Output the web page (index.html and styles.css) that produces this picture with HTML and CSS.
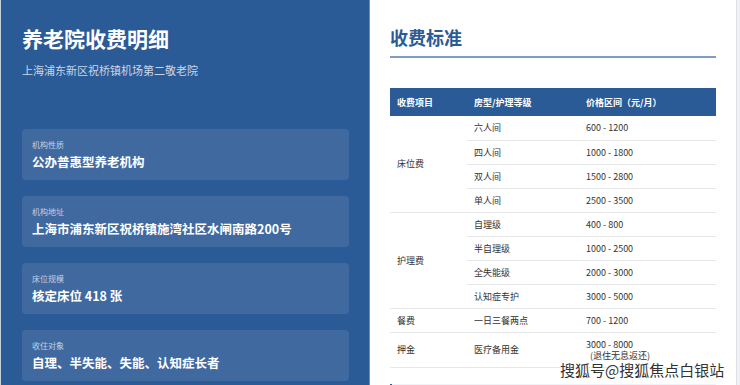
FILE: index.html
```html
<html>
<head>
    <meta charset="UTF-8">
    <meta name="viewport" content="width=device-width, initial-scale=1.0">
    <title>养老院收费明细</title>
    <link rel="stylesheet" href="styles.css">
</head>
<body>
<div class="page">
    <aside class="sidebar">
        <h1 class="title">养老院收费明细</h1>
        <p class="subtitle">上海浦东新区祝桥镇机场第二敬老院</p>

        <div class="info-list">
            <div class="info-card">
                <div class="info-label">机构性质</div>
                <div class="info-value">公办普惠型养老机构</div>
            </div>
            <div class="info-card">
                <div class="info-label">机构地址</div>
                <div class="info-value">上海市浦东新区祝桥镇施湾社区水闸南路200号</div>
            </div>
            <div class="info-card">
                <div class="info-label">床位规模</div>
                <div class="info-value">核定床位 418 张</div>
            </div>
            <div class="info-card">
                <div class="info-label">收住对象</div>
                <div class="info-value">自理、半失能、失能、认知症长者</div>
            </div>
        </div>
    </aside>

    <main class="content">
        <h2 class="section-title">收费标准</h2>

        <table class="fee-table">
            <thead>
                <tr>
                    <th class="col-item">收费项目</th>
                    <th class="col-type">房型/护理等级</th>
                    <th>价格区间（元/月）</th>
                </tr>
            </thead>
            <tbody>
                <tr>
                    <td rowspan="4">床位费</td>
                    <td>六人间</td>
                    <td>600 - 1200</td>
                </tr>
                <tr>
                    <td>四人间</td>
                    <td>1000 - 1800</td>
                </tr>
                <tr>
                    <td>双人间</td>
                    <td>1500 - 2800</td>
                </tr>
                <tr>
                    <td>单人间</td>
                    <td>2500 - 3500</td>
                </tr>
                <tr>
                    <td rowspan="4">护理费</td>
                    <td>自理级</td>
                    <td>400 - 800</td>
                </tr>
                <tr>
                    <td>半自理级</td>
                    <td>1000 - 2500</td>
                </tr>
                <tr>
                    <td>全失能级</td>
                    <td>2000 - 3000</td>
                </tr>
                <tr>
                    <td>认知症专护</td>
                    <td>3000 - 5000</td>
                </tr>
                <tr>
                    <td>餐费</td>
                    <td>一日三餐两点</td>
                    <td>700 - 1200</td>
                </tr>
                <tr class="tall">
                    <td>押金</td>
                    <td>医疗备用金</td>
                    <td>3000 - 8000<br><span class="note">(退住无息返还)</span></td>
                </tr>
            </tbody>
        </table>

        <div class="tip"></div>

        <div class="watermark">搜狐号@搜狐焦点白银站</div>
    </main>

    <div class="scroll-edge"></div>
</div>
</body>
</html>
```

FILE: styles.css
```css
:root {
    --primary-color: #2b5b96;
    --card-bg: #4069a0;
    --line-color: #e6e8eb;
    --text-color: #333333;
}

body, html {
    margin: 0;
    padding: 0;
    height: 100%;
    overflow: hidden;
    font-family: "Noto Sans CJK SC", "Liberation Sans", sans-serif;
    background-color: white;
    color: var(--text-color);
}

.page {
    display: flex;
    height: 100%;
}

.sidebar {
    width: 347px;
    flex-shrink: 0;
    background-color: var(--primary-color);
    border-left: 1px solid #c4d0df;
    border-right: 1px solid #6f8fbb;
    padding: 25px 0 0 21px;
    color: white;
}

.title {
    margin: 0;
    font-size: 21px;
    line-height: 26px;
    font-weight: bold;
}

.subtitle {
    margin: 11px 0 0;
    font-size: 11px;
    line-height: 16px;
    color: #c9d5e6;
}

.info-list {
    display: flex;
    flex-direction: column;
    gap: 16px;
    margin-top: 51px;
    width: 327px;
}

.info-card {
    background-color: var(--card-bg);
    border-radius: 4px;
    padding: 10px 10px 9px;
}

.info-label {
    font-size: 8px;
    line-height: 12px;
    color: #c3d0e2;
}

.info-value {
    margin-top: 2px;
    font-size: 12.5px;
    line-height: 18px;
    font-weight: bold;
}

.content {
    position: relative;
    flex: 1;
    padding: 25px 20px 0;
}

.section-title {
    margin: 0;
    font-size: 18px;
    line-height: 24px;
    font-weight: bold;
    color: var(--primary-color);
    padding-bottom: 7px;
    border-bottom: 2px solid #7f9cc4;
}

.fee-table {
    width: 100%;
    margin-top: 30px;
    border-collapse: collapse;
    font-size: 9px;
}

.fee-table th {
    height: 28px;
    padding: 0 7px;
    background-color: var(--primary-color);
    color: white;
    text-align: left;
    font-weight: bold;
}

.fee-table .col-item {
    width: 63px;
}

.fee-table .col-type {
    width: 98px;
}

.fee-table td {
    height: 24px;
    padding: 0 7px;
    border-bottom: 1px solid var(--line-color);
    line-height: 11px;
}

.fee-table tr.tall td {
    height: 35px;
}

.note {
    padding-left: 4px;
}

.tip {
    margin-top: 16px;
    height: 40px;
    background-color: #eef3f9;
    border-left: 2px solid var(--primary-color);
}

.watermark {
    position: absolute;
    left: 190px;
    top: 360px;
    font-size: 15px;
    line-height: 20px;
    color: #333333;
    text-shadow: 0 0 2px white, 0 0 2px white, 0 0 2px white;
}

.scroll-edge {
    width: 3px;
    flex-shrink: 0;
    background-color: #eef0f3;
    border-left: 1px solid #dde2e8;
}
```
